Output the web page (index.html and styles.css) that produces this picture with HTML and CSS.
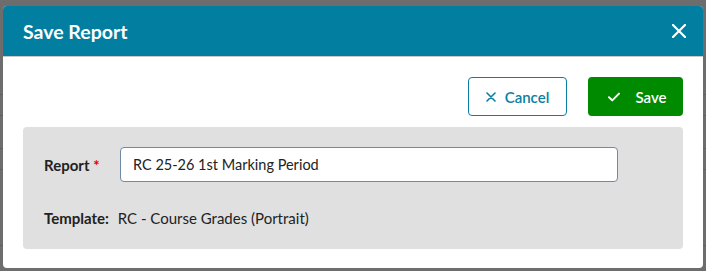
FILE: index.html
```html
<!DOCTYPE html>
<html lang="en">
<head>
  <meta charset="UTF-8">
  <meta name="viewport" content="width=device-width, initial-scale=1.0">
  <title>Save Report</title>
  <link rel="stylesheet" href="styles.css">
</head>
<body>
  <!-- Backdrop behind the modal -->
  <div class="backdrop">
    <div class="modal">
      <!-- Header -->
      <div class="modal-header">
        <h1 class="modal-title">Save Report</h1>
        <button class="close-btn" aria-label="Close">
          <svg width="14" height="14" viewBox="0 0 14 14">
            <path d="M1 1 L13 13 M13 1 L1 13" stroke="#fff" stroke-width="2.2" stroke-linecap="round"/>
          </svg>
        </button>
      </div>

      <!-- Body -->
      <div class="modal-body">
        <div class="actions">
          <button class="btn btn-cancel">
            <svg width="10" height="10" viewBox="0 0 10 10">
              <path d="M1 1 L9 9 M9 1 L1 9" stroke="currentColor" stroke-width="1.6" stroke-linecap="round"/>
            </svg>
            Cancel
          </button>
          <button class="btn btn-save">
            <svg width="12" height="10" viewBox="0 0 12 10">
              <path d="M1 5.2 L4.3 8.4 L11 1.6" fill="none" stroke="currentColor" stroke-width="2" stroke-linecap="round" stroke-linejoin="round"/>
            </svg>
            Save
          </button>
        </div>

        <div class="panel">
          <div class="field-row">
            <label class="field-label" for="report-name">Report <span class="required">*</span></label>
            <input id="report-name" class="field-input" type="text" value="RC 25-26 1st Marking Period">
          </div>
          <div class="template-row">
            <span class="template-label">Template:</span>
            <span class="template-value">RC - Course Grades (Portrait)</span>
          </div>
        </div>
      </div>
    </div>
  </div>
</body>
</html>
```

FILE: styles.css
```css
/* Page + backdrop */
body {
  margin: 0;
  font-family: Lato, "Open Sans", Arial, sans-serif;
}

.backdrop {
  width: 706px;
  height: 271px;
  box-sizing: border-box;
  padding: 6px 3px 3px 3px;
  background-color: #6d6d6d;
  /* faint table rows showing through the overlay */
  background-image:
    linear-gradient(#5f5f5f, #5f5f5f),
    linear-gradient(#5f5f5f, #5f5f5f),
    linear-gradient(#5f5f5f, #5f5f5f),
    linear-gradient(#5f5f5f, #5f5f5f),
    linear-gradient(#5f5f5f, #5f5f5f);
  background-size: 100% 1px;
  background-repeat: no-repeat;
  background-position: 0 94px, 0 115px, 0 148px, 0 169px, 0 245px;
}

/* Modal shell */
.modal {
  width: 700px;
  height: 262px;
  background: #fff;
  border-radius: 4px;
  overflow: hidden;
  display: flex;
  flex-direction: column;
}

.modal-header {
  height: 50px;
  flex-shrink: 0;
  background-color: #027ea0;
  border-bottom: 1px solid #c9c9c9;
  display: flex;
  align-items: center;
  justify-content: space-between;
  padding: 0 17px 0 20px;
}

.modal-title {
  margin: 0;
  color: #fff;
  font-size: 19.5px;
  font-weight: 700;
}

.close-btn {
  background: none;
  border: none;
  padding: 0;
  display: flex;
  cursor: pointer;
}

.modal-body {
  padding: 20px 20px 20px 20px;
}

/* Buttons */
.actions {
  display: flex;
  justify-content: flex-end;
  gap: 21px;
  margin-bottom: 11px;
}

.btn {
  height: 39px;
  border-radius: 4px;
  font-family: inherit;
  font-size: 15px;
  font-weight: 600;
  display: flex;
  align-items: center;
  justify-content: center;
  cursor: pointer;
}

.btn-cancel {
  width: 99px;
  background: #fff;
  color: #0a7ea2;
  border: 1px solid #0a7ea2;
  gap: 9px;
}

.btn-save {
  width: 95px;
  background: #008a00;
  color: #fff;
  border: none;
  gap: 15px;
  padding-left: 10px;
}

/* Grey form panel */
.panel {
  background: #e0e0e0;
  border-radius: 4px;
  padding: 20px 65px 22px 21px;
}

.field-row {
  display: flex;
  align-items: center;
}

.field-label {
  width: 76px;
  flex-shrink: 0;
  font-size: 15px;
  font-weight: 700;
  color: #222;
}

.required {
  color: #e00000;
}

.field-input {
  flex: 1;
  height: 35px;
  box-sizing: border-box;
  border: 1px solid #6f8aa6;
  border-radius: 4px;
  padding: 0 12px;
  font-family: inherit;
  font-size: 14.5px;
  color: #222;
  background: #fff;
}

.template-row {
  margin-top: 27px;
  font-size: 15px;
  color: #222;
}

.template-label {
  font-weight: 700;
  margin-right: 5px;
}
```
